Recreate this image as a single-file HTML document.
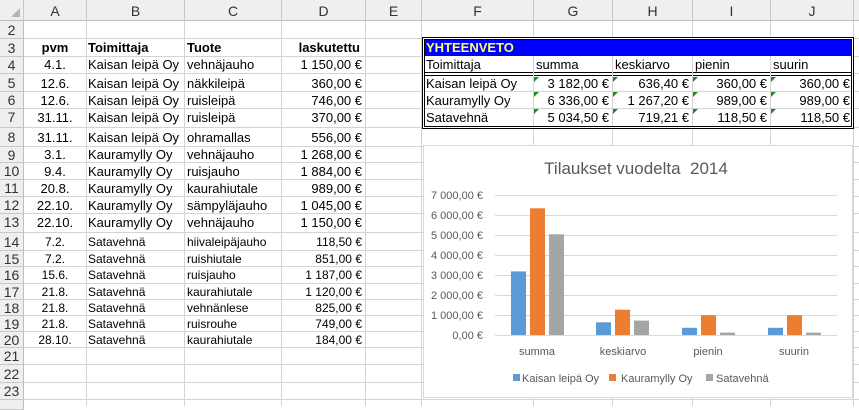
<!DOCTYPE html>
<html><head><meta charset="utf-8">
<style>
*{margin:0;padding:0;box-sizing:border-box}
body{width:859px;height:406px;overflow:hidden;background:#fff;font-family:"Liberation Sans",Arial,sans-serif;position:relative}
.a{position:absolute}
.vl{position:absolute;top:0;width:1px;height:406px;background:#d4d4d4}
.hl{position:absolute;left:0;width:859px;height:1px;background:#d4d4d4}
.ch{position:absolute;top:0;height:21px;background:#efefef;color:#333;font-size:14px;text-align:center;line-height:22px;border-right:1px solid #c8c8c8;border-bottom:1px solid #bdbdbd}
.rh{position:absolute;left:0;width:24px;background:#efefef;color:#333;font-size:14px;text-align:center;border-bottom:1px solid #c8c8c8;border-right:1px solid #bdbdbd}
.c{position:absolute;white-space:nowrap;font-size:13px;line-height:18px;color:#000;overflow:visible}
.s{font-size:12px;line-height:17px}
.r{text-align:right}
.m{text-align:center}
.b{font-weight:bold}
.tri{position:absolute;width:0;height:0;border-top:5px solid #1f8a1f;border-right:5px solid transparent}
</style></head><body>
<div class="vl" style="left:86px"></div><div class="vl" style="left:184px"></div><div class="vl" style="left:281px"></div><div class="vl" style="left:365px"></div><div class="vl" style="left:421px"></div><div class="vl" style="left:533px"></div><div class="vl" style="left:612px"></div><div class="vl" style="left:692px"></div><div class="vl" style="left:770px"></div><div class="vl" style="left:853px"></div>
<div class="hl" style="top:38px"></div><div class="hl" style="top:56px"></div><div class="hl" style="top:73px"></div><div class="hl" style="top:91px"></div><div class="hl" style="top:108px"></div><div class="hl" style="top:127px"></div><div class="hl" style="top:146px"></div><div class="hl" style="top:162px"></div><div class="hl" style="top:179px"></div><div class="hl" style="top:196px"></div><div class="hl" style="top:213px"></div><div class="hl" style="top:232px"></div><div class="hl" style="top:250px"></div><div class="hl" style="top:266px"></div><div class="hl" style="top:283px"></div><div class="hl" style="top:299px"></div><div class="hl" style="top:315px"></div><div class="hl" style="top:331px"></div><div class="hl" style="top:347px"></div><div class="hl" style="top:364px"></div><div class="hl" style="top:382px"></div><div class="hl" style="top:399px"></div>
<div class="ch" style="left:0;width:24px"><span style="position:absolute;right:3px;bottom:3px;width:0;height:0;border-left:9px solid transparent;border-bottom:9px solid #b5b5b5"></span></div>
<div class="ch" style="left:24px;width:63px">A</div><div class="ch" style="left:87px;width:98px">B</div><div class="ch" style="left:185px;width:97px">C</div><div class="ch" style="left:282px;width:84px">D</div><div class="ch" style="left:366px;width:56px">E</div><div class="ch" style="left:422px;width:112px">F</div><div class="ch" style="left:534px;width:79px">G</div><div class="ch" style="left:613px;width:80px">H</div><div class="ch" style="left:693px;width:78px">I</div><div class="ch" style="left:771px;width:83px">J</div><div class="ch" style="left:854px;width:10px"></div>
<div class="rh" style="top:21px;height:18px;line-height:18px">2</div>
<div class="rh" style="top:39px;height:18px;line-height:18px">3</div>
<div class="rh" style="top:57px;height:17px;line-height:17px">4</div>
<div class="rh" style="top:74px;height:18px;line-height:19px">5</div>
<div class="rh" style="top:92px;height:17px;line-height:17px">6</div>
<div class="rh" style="top:109px;height:19px;line-height:17px">7</div>
<div class="rh" style="top:128px;height:19px;line-height:19px">8</div>
<div class="rh" style="top:147px;height:16px;line-height:16px">9</div>
<div class="rh" style="top:163px;height:17px;line-height:17px">10</div>
<div class="rh" style="top:180px;height:17px;line-height:17px">11</div>
<div class="rh" style="top:197px;height:17px;line-height:17px">12</div>
<div class="rh" style="top:214px;height:19px;line-height:17px">13</div>
<div class="rh" style="top:233px;height:18px;line-height:18px">14</div>
<div class="rh" style="top:251px;height:16px;line-height:16px">15</div>
<div class="rh" style="top:267px;height:17px;line-height:17px">16</div>
<div class="rh" style="top:284px;height:16px;line-height:16px">17</div>
<div class="rh" style="top:300px;height:16px;line-height:16px">18</div>
<div class="rh" style="top:316px;height:16px;line-height:16px">19</div>
<div class="rh" style="top:332px;height:16px;line-height:16px">20</div>
<div class="rh" style="top:348px;height:17px;line-height:17px">21</div>
<div class="rh" style="top:365px;height:18px;line-height:18px">22</div>
<div class="rh" style="top:383px;height:17px;line-height:17px">23</div>
<div class="rh" style="top:400px;height:10px"></div>

<div class="c b m" style="left:24px;width:62px;top:39px">pvm</div>
<div class="c b" style="left:88px;top:39px">Toimittaja</div>
<div class="c b" style="left:187px;top:39px">Tuote</div>
<div class="c b" style="left:282px;width:80px;top:39px;text-align:right;padding-right:2px">laskutettu</div>

<div class="c m" style="left:24px;width:62px;top:56px">4.1.</div><div class="c" style="left:88px;top:56px">Kaisan leipä Oy</div><div class="c" style="left:187px;top:56px">vehnäjauho</div><div class="c r" style="left:282px;width:80px;top:56px">1 150,00 €</div>
<div class="c m" style="left:24px;width:62px;top:75px">12.6.</div><div class="c" style="left:88px;top:75px">Kaisan leipä Oy</div><div class="c" style="left:187px;top:75px">näkkileipä</div><div class="c r" style="left:282px;width:80px;top:75px">360,00 €</div>
<div class="c m" style="left:24px;width:62px;top:92px">12.6.</div><div class="c" style="left:88px;top:92px">Kaisan leipä Oy</div><div class="c" style="left:187px;top:92px">ruisleipä</div><div class="c r" style="left:282px;width:80px;top:92px">746,00 €</div>
<div class="c m" style="left:24px;width:62px;top:109px">31.11.</div><div class="c" style="left:88px;top:109px">Kaisan leipä Oy</div><div class="c" style="left:187px;top:109px">ruisleipä</div><div class="c r" style="left:282px;width:80px;top:109px">370,00 €</div>
<div class="c m" style="left:24px;width:62px;top:129px">31.11.</div><div class="c" style="left:88px;top:129px">Kaisan leipä Oy</div><div class="c" style="left:187px;top:129px">ohramallas</div><div class="c r" style="left:282px;width:80px;top:129px">556,00 €</div>
<div class="c m" style="left:24px;width:62px;top:146px">3.1.</div><div class="c" style="left:88px;top:146px">Kauramylly Oy</div><div class="c" style="left:187px;top:146px">vehnäjauho</div><div class="c r" style="left:282px;width:80px;top:146px">1 268,00 €</div>
<div class="c m" style="left:24px;width:62px;top:163px">9.4.</div><div class="c" style="left:88px;top:163px">Kauramylly Oy</div><div class="c" style="left:187px;top:163px">ruisjauho</div><div class="c r" style="left:282px;width:80px;top:163px">1 884,00 €</div>
<div class="c m" style="left:24px;width:62px;top:180px">20.8.</div><div class="c" style="left:88px;top:180px">Kauramylly Oy</div><div class="c" style="left:187px;top:180px">kaurahiutale</div><div class="c r" style="left:282px;width:80px;top:180px">989,00 €</div>
<div class="c m" style="left:24px;width:62px;top:197px">22.10.</div><div class="c" style="left:88px;top:197px">Kauramylly Oy</div><div class="c" style="left:187px;top:197px">sämpyläjauho</div><div class="c r" style="left:282px;width:80px;top:197px">1 045,00 €</div>
<div class="c m" style="left:24px;width:62px;top:214px">22.10.</div><div class="c" style="left:88px;top:214px">Kauramylly Oy</div><div class="c" style="left:187px;top:214px">vehnäjauho</div><div class="c r" style="left:282px;width:80px;top:214px">1 150,00 €</div>

<div class="c s m" style="left:24px;width:62px;top:234px">7.2.</div><div class="c s" style="left:88px;top:234px">Satavehnä</div><div class="c s" style="left:187px;top:234px">hiivaleipäjauho</div><div class="c s r" style="left:282px;width:80px;top:234px">118,50 €</div>
<div class="c s m" style="left:24px;width:62px;top:251px">7.2.</div><div class="c s" style="left:88px;top:251px">Satavehnä</div><div class="c s" style="left:187px;top:251px">ruishiutale</div><div class="c s r" style="left:282px;width:80px;top:251px">851,00 €</div>
<div class="c s m" style="left:24px;width:62px;top:267px">15.6.</div><div class="c s" style="left:88px;top:267px">Satavehnä</div><div class="c s" style="left:187px;top:267px">ruisjauho</div><div class="c s r" style="left:282px;width:80px;top:267px">1 187,00 €</div>
<div class="c s m" style="left:24px;width:62px;top:284px">21.8.</div><div class="c s" style="left:88px;top:284px">Satavehnä</div><div class="c s" style="left:187px;top:284px">kaurahiutale</div><div class="c s r" style="left:282px;width:80px;top:284px">1 120,00 €</div>
<div class="c s m" style="left:24px;width:62px;top:300px">21.8.</div><div class="c s" style="left:88px;top:300px">Satavehnä</div><div class="c s" style="left:187px;top:300px">vehnänlese</div><div class="c s r" style="left:282px;width:80px;top:300px">825,00 €</div>
<div class="c s m" style="left:24px;width:62px;top:316px">21.8.</div><div class="c s" style="left:88px;top:316px">Satavehnä</div><div class="c s" style="left:187px;top:316px">ruisrouhe</div><div class="c s r" style="left:282px;width:80px;top:316px">749,00 €</div>
<div class="c s m" style="left:24px;width:62px;top:332px">28.10.</div><div class="c s" style="left:88px;top:332px">Satavehnä</div><div class="c s" style="left:187px;top:332px">kaurahiutale</div><div class="c s r" style="left:282px;width:80px;top:332px">184,00 €</div>

<div class="a" style="left:422px;top:37px;width:432px;height:92px;background:#fff;border:3px double #000"></div>
<div class="a" style="left:425px;top:40px;width:426px;height:16px;background:#0000ff"></div>
<div class="c b" style="left:426px;top:39px;color:#ffff66;line-height:18px">YHTEENVETO</div>
<div class="a" style="left:425px;top:72px;width:426px;height:4px;border-top:1px solid #000;border-bottom:1px solid #000"></div>
<div class="a" style="left:533px;top:56px;width:1px;height:70px;background:#d4d4d4"></div>
<div class="a" style="left:612px;top:56px;width:1px;height:70px;background:#d4d4d4"></div>
<div class="a" style="left:692px;top:56px;width:1px;height:70px;background:#d4d4d4"></div>
<div class="a" style="left:770px;top:56px;width:1px;height:70px;background:#d4d4d4"></div>
<div class="a" style="left:425px;top:91px;width:426px;height:1px;background:#d4d4d4"></div>
<div class="a" style="left:425px;top:108px;width:426px;height:1px;background:#d4d4d4"></div>
<div class="c" style="left:426px;top:56px">Toimittaja</div>
<div class="c" style="left:536px;top:56px">summa</div>
<div class="c" style="left:615px;top:56px">keskiarvo</div>
<div class="c" style="left:695px;top:56px">pienin</div>
<div class="c" style="left:773px;top:56px">suurin</div>
<div class="c" style="left:426px;top:75px">Kaisan leipä Oy</div>
<div class="c" style="left:426px;top:92px">Kauramylly Oy</div>
<div class="c" style="left:426px;top:109px">Satavehnä</div>
<div class="c r" style="left:533px;width:76px;top:75px">3 182,00 €</div><div class="c r" style="left:612px;width:77px;top:75px">636,40 €</div><div class="c r" style="left:692px;width:75px;top:75px">360,00 €</div><div class="c r" style="left:770px;width:80px;top:75px">360,00 €</div>
<div class="c r" style="left:533px;width:76px;top:92px">6 336,00 €</div><div class="c r" style="left:612px;width:77px;top:92px">1 267,20 €</div><div class="c r" style="left:692px;width:75px;top:92px">989,00 €</div><div class="c r" style="left:770px;width:80px;top:92px">989,00 €</div>
<div class="c r" style="left:533px;width:76px;top:109px">5 034,50 €</div><div class="c r" style="left:612px;width:77px;top:109px">719,21 €</div><div class="c r" style="left:692px;width:75px;top:109px">118,50 €</div><div class="c r" style="left:770px;width:80px;top:109px">118,50 €</div>
<div class="tri" style="left:534px;top:77px"></div><div class="tri" style="left:613px;top:77px"></div><div class="tri" style="left:693px;top:77px"></div><div class="tri" style="left:771px;top:77px"></div>
<div class="tri" style="left:534px;top:92px"></div><div class="tri" style="left:613px;top:92px"></div><div class="tri" style="left:693px;top:92px"></div><div class="tri" style="left:771px;top:92px"></div>
<div class="tri" style="left:534px;top:109px"></div><div class="tri" style="left:613px;top:109px"></div><div class="tri" style="left:693px;top:109px"></div><div class="tri" style="left:771px;top:109px"></div>

<svg class="a" style="left:0;top:0" width="859" height="406" font-family="Liberation Sans, Arial, sans-serif">
<rect x="423.5" y="145.5" width="429" height="252" fill="#fff" stroke="#d9d9d9"/>
<text x="636" y="174" text-anchor="middle" font-size="17" fill="#595959" xml:space="preserve">Tilaukset vuodelta  2014</text>
<g stroke="#d9d9d9" stroke-width="1">
<line x1="495" x2="837" y1="195.5" y2="195.5"/><line x1="495" x2="837" y1="215.5" y2="215.5"/><line x1="495" x2="837" y1="235.5" y2="235.5"/><line x1="495" x2="837" y1="255.5" y2="255.5"/><line x1="495" x2="837" y1="275.5" y2="275.5"/><line x1="495" x2="837" y1="295.5" y2="295.5"/><line x1="495" x2="837" y1="315.5" y2="315.5"/><line x1="495" x2="837" y1="335.5" y2="335.5"/>
</g>
<g font-size="11" fill="#595959" text-anchor="end">
<text x="483" y="199">7 000,00 €</text><text x="483" y="219">6 000,00 €</text><text x="483" y="239">5 000,00 €</text><text x="483" y="259">4 000,00 €</text><text x="483" y="279">3 000,00 €</text><text x="483" y="299">2 000,00 €</text><text x="483" y="319">1 000,00 €</text><text x="483" y="339">0,00 €</text>
</g>
<g fill="#5b9bd5"><rect x="511" y="271.4" width="15" height="63.6"/><rect x="596" y="322.3" width="15" height="12.7"/><rect x="682" y="327.8" width="15" height="7.2"/><rect x="768" y="327.8" width="15" height="7.2"/></g>
<g fill="#ed7d31"><rect x="530" y="208.3" width="15" height="126.7"/><rect x="615" y="309.7" width="15" height="25.3"/><rect x="701" y="315.2" width="15" height="19.8"/><rect x="787" y="315.2" width="15" height="19.8"/></g>
<g fill="#a5a5a5"><rect x="549" y="234.3" width="15" height="100.7"/><rect x="634" y="320.6" width="15" height="14.4"/><rect x="720" y="332.6" width="15" height="2.4"/><rect x="806" y="332.6" width="15" height="2.4"/></g>
<g font-size="11" fill="#595959" text-anchor="middle">
<text x="537" y="355">summa</text><text x="623" y="355">keskiarvo</text><text x="708" y="355">pienin</text><text x="794" y="355">suurin</text>
</g>
<g font-size="11" fill="#595959">
<rect x="513" y="374" width="7" height="7" fill="#5b9bd5"/><text x="522" y="382">Kaisan leipä Oy</text>
<rect x="609" y="374" width="7" height="7" fill="#ed7d31"/><text x="621" y="382">Kauramylly Oy</text>
<rect x="706" y="374" width="7" height="7" fill="#a5a5a5"/><text x="716" y="382">Satavehnä</text>
</g>
</svg>
</body></html>
